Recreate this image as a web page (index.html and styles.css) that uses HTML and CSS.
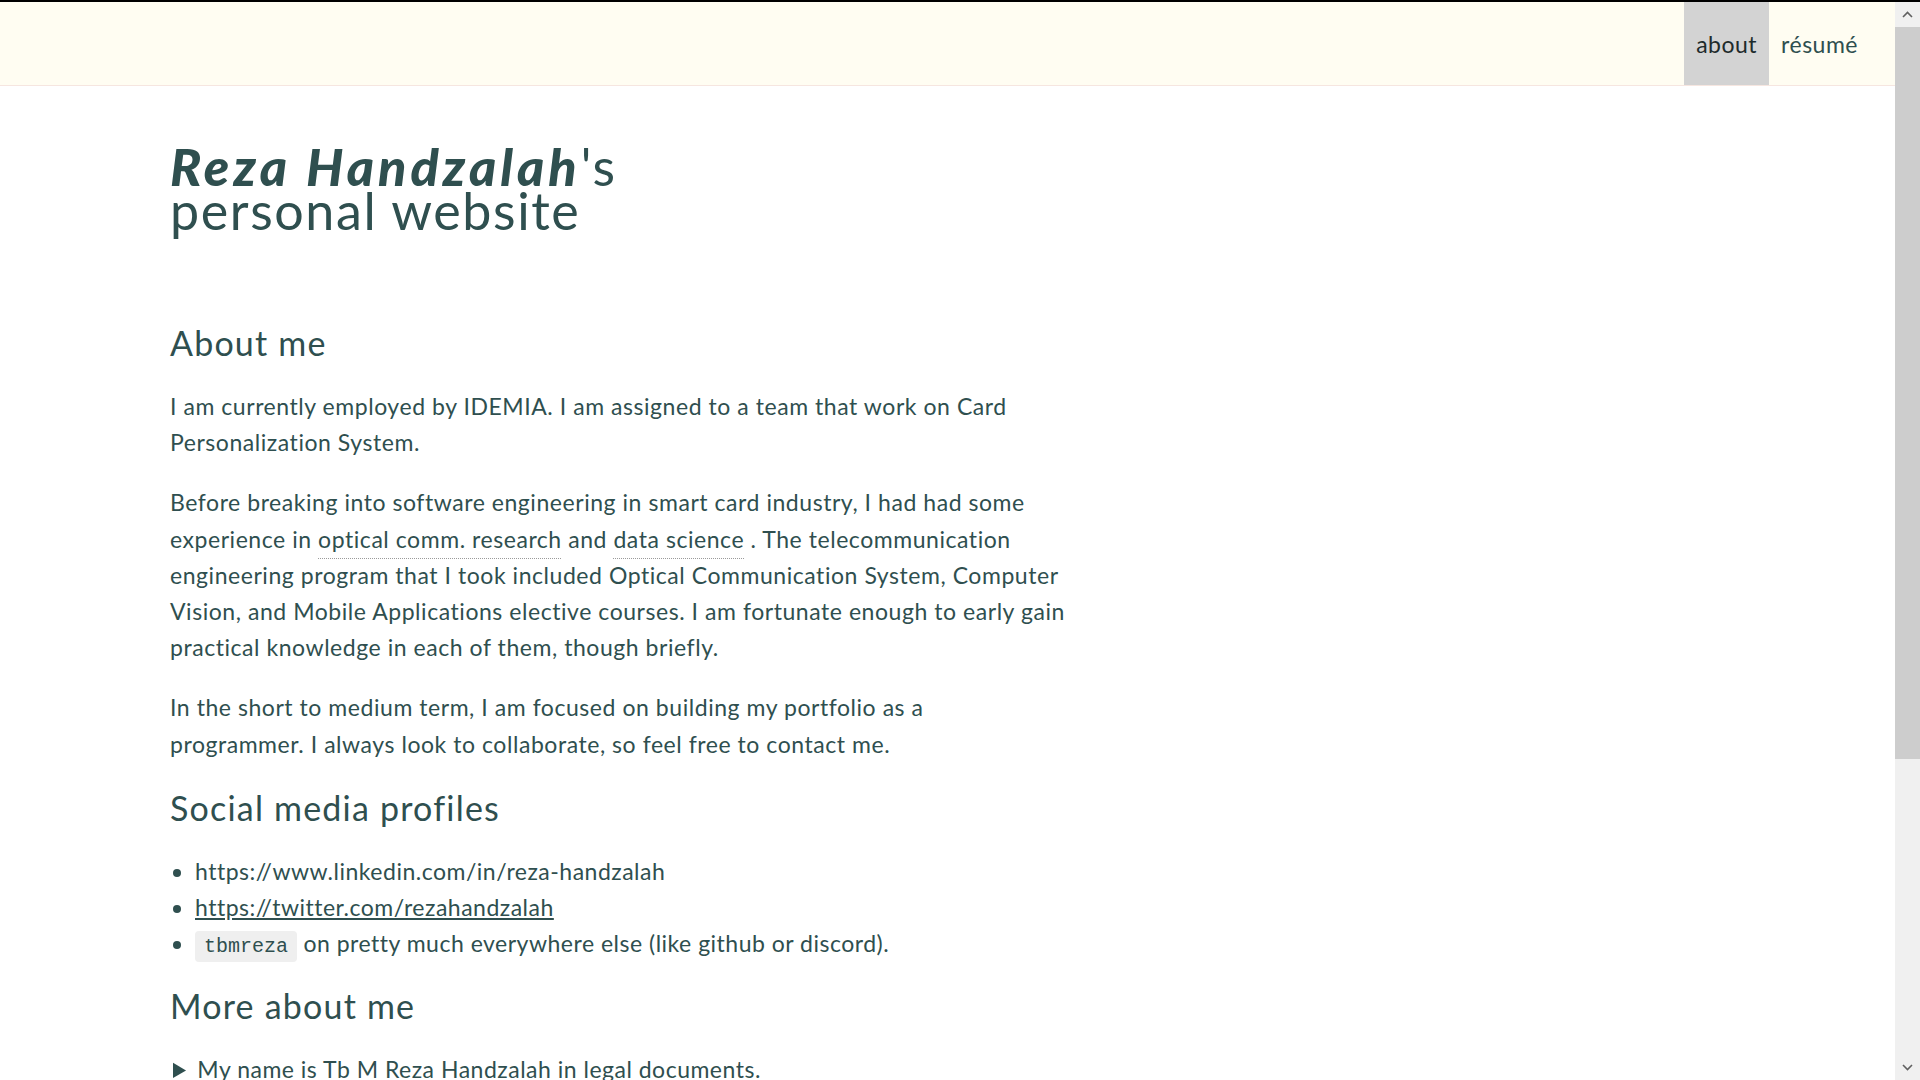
FILE: index.html
```html
<!DOCTYPE html>
<html lang="en">
<head>
<meta charset="utf-8">
<title>Reza Handzalah's personal website</title>
<link rel="stylesheet" href="styles.css">
</head>
<body>
<header class="site-header">
  <nav class="nav">
    <a class="nav-link active" href="#">about</a>
    <a class="nav-link" href="#">résumé</a>
  </nav>
</header>
<main class="page">
  <h1 class="site-title"><span class="name">Reza Handzalah</span>'s<br>personal website</h1>

  <h2 class="section-title">About me</h2>
  <p class="text">I am currently employed by IDEMIA. I am assigned to a team that work on Card Personalization System.</p>
  <p class="text">Before breaking into software engineering in smart card industry, I had had some experience in <a class="dotted" href="#">optical comm. research</a> and <a class="dotted" href="#">data science</a> . The telecommunication engineering program that I took included Optical Communication System, Computer Vision, and Mobile Applications elective courses. I am fortunate enough to early gain practical knowledge in each of them, though briefly.</p>
  <p class="text text-narrow">In the short to medium term, I am focused on building my portfolio as a programmer. I always look to collaborate, so feel free to contact me.</p>

  <h2 class="section-title">Social media profiles</h2>
  <ul class="list">
    <li>https://www.linkedin.com/in/reza-handzalah</li>
    <li><a class="plain-link" href="#">https://twitter.com/rezahandzalah</a></li>
    <li><code class="code">tbmreza</code> on pretty much everywhere else (like github or discord).</li>
  </ul>

  <h2 class="section-title">More about me</h2>
  <details class="more">
    <summary>My name is Tb M Reza Handzalah in legal documents.</summary>
  </details>
</main>
<div class="scrollbar" aria-hidden="true">
  <svg class="scroll-arrow" width="25" height="25" viewBox="0 0 25 25"><polyline points="8,15 12.5,10.5 17,15" fill="none" stroke="#606060" stroke-width="1.6"/></svg>
  <div class="scroll-track"><div class="scroll-thumb"></div></div>
  <svg class="scroll-arrow" width="25" height="25" viewBox="0 0 25 25"><polyline points="8,10 12.5,14.5 17,10" fill="none" stroke="#606060" stroke-width="1.6"/></svg>
</div>
</body>
</html>
```
FILE: styles.css
```css
html {
  background: #ffffff;
}
body {
  margin: 0;
  border-top: 2px solid #000;
  font-family: "Lato", "Liberation Sans", sans-serif;
  color: #2f4f4f;
}
.site-header {
  display: flex;
  justify-content: flex-end;
  height: 83px;
  background: #fffdf2;
  border-bottom: 1px solid #f6e6e0;
  padding-right: 50px;
}
.nav {
  display: flex;
}
.nav-link {
  display: flex;
  align-items: center;
  padding: 0 12px;
  font-size: 23px;
  letter-spacing: 0.5px;
  color: #2f4f4f;
  text-decoration: none;
}
.nav-link.active {
  background: #d3d3d3;
  color: #1e2b2b;
}
.page {
  max-width: 900px;
  padding: 0 0 430px 170px;
}
.site-title {
  margin: 58px 0 92px;
  font-size: 52px;
  line-height: 44px;
  font-weight: 400;
  letter-spacing: 1.6px;
}
.name {
  font-weight: 900;
  font-style: italic;
  letter-spacing: 4px;
}
.section-title {
  margin: 22px 0 26px;
  font-size: 34px;
  line-height: 38px;
  font-weight: 400;
  letter-spacing: 1.2px;
}
.text + .section-title {
  margin-top: 27px;
}
.text {
  margin: 24px 0;
  font-size: 23px;
  line-height: 36.2px;
  letter-spacing: 0.55px;
}
.text-narrow {
  max-width: 880px;
}
.dotted {
  color: inherit;
  text-decoration: underline dotted #9a9a9a;
  text-decoration-thickness: 1px;
  text-underline-offset: 10px;
}
.list {
  margin: 26px 0 0;
  padding-left: 25px;
  font-size: 23px;
  line-height: 36px;
  letter-spacing: 0.5px;
}
.plain-link {
  color: inherit;
}
.code {
  font-family: "Liberation Mono", monospace;
  font-size: 20px;
  letter-spacing: 0;
  background: #efefef;
  border-radius: 4px;
  padding: 4px 9px;
}
.more {
  margin: 25px 0;
  font-size: 23px;
  line-height: 36px;
  letter-spacing: 0.5px;
}
.more summary {
  padding-left: 3px;
}
.scrollbar {
  position: fixed;
  top: 2px;
  right: 0;
  bottom: 0;
  width: 25px;
  display: flex;
  flex-direction: column;
  background: #f0f0f0;
}
.scroll-arrow {
  flex: none;
  display: block;
}
.scroll-track {
  flex: 1;
}
.scroll-thumb {
  height: 732px;
  background: #cdcdcd;
}
```
